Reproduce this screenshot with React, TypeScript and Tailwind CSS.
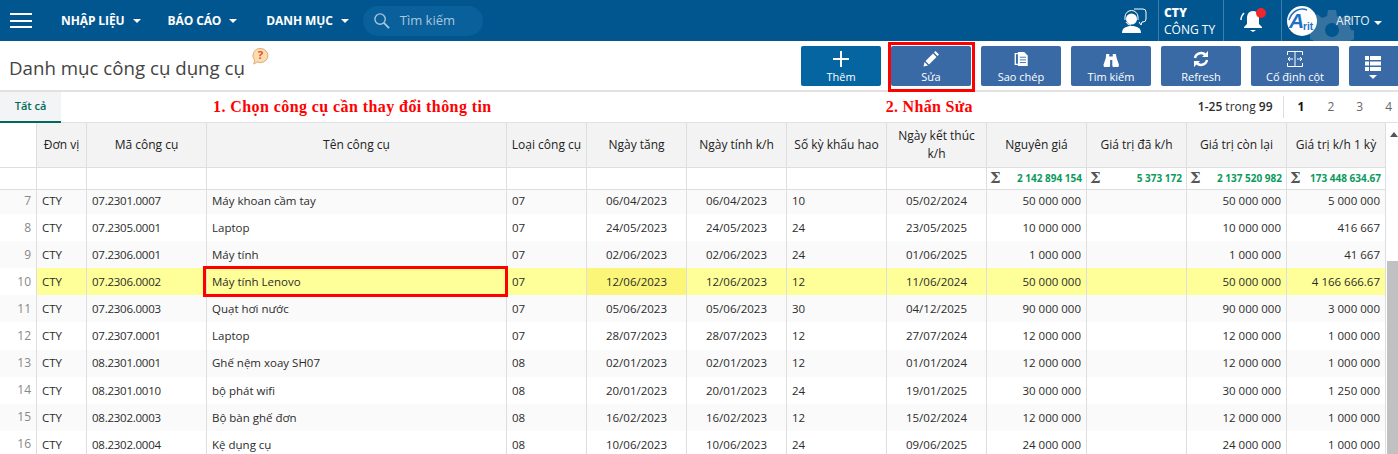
const font = "font-['Open_Sans','Noto_Sans',sans-serif]";

const columns = [
  "Đơn vị",
  "Mã công cụ",
  "Tên công cụ",
  "Loại công cụ",
  "Ngày tăng",
  "Ngày tính k/h",
  "Số kỳ khấu hao",
  "Ngày kết thúc k/h",
  "Nguyên giá",
  "Giá trị đã k/h",
  "Giá trị còn lại",
  "Giá trị k/h 1 kỳ",
];

const totals = ["2 142 894 154", "5 373 172", "2 137 520 982", "173 448 634.67"];

const rows = [
  ["7", "CTY", "07.2301.0007", "Máy khoan cầm tay", "07", "06/04/2023", "06/04/2023", "10", "05/02/2024", "50 000 000", "", "50 000 000", "5 000 000"],
  ["8", "CTY", "07.2305.0001", "Laptop", "07", "24/05/2023", "24/05/2023", "24", "23/05/2025", "10 000 000", "", "10 000 000", "416 667"],
  ["9", "CTY", "07.2306.0001", "Máy tính", "07", "02/06/2023", "02/06/2023", "24", "01/06/2025", "1 000 000", "", "1 000 000", "41 667"],
  ["10", "CTY", "07.2306.0002", "Máy tính Lenovo", "07", "12/06/2023", "12/06/2023", "12", "11/06/2024", "50 000 000", "", "50 000 000", "4 166 666.67"],
  ["11", "CTY", "07.2306.0003", "Quạt hơi nước", "07", "05/06/2023", "05/06/2023", "30", "04/12/2025", "90 000 000", "", "90 000 000", "3 000 000"],
  ["12", "CTY", "07.2307.0001", "Laptop", "07", "28/07/2023", "28/07/2023", "12", "27/07/2024", "12 000 000", "", "12 000 000", "1 000 000"],
  ["13", "CTY", "08.2301.0001", "Ghế nệm xoay SH07", "08", "02/01/2023", "02/01/2023", "12", "01/01/2024", "12 000 000", "", "12 000 000", "1 000 000"],
  ["14", "CTY", "08.2301.0010", "bộ phát wifi", "08", "20/01/2023", "20/01/2023", "24", "19/01/2025", "30 000 000", "", "30 000 000", "1 250 000"],
  ["15", "CTY", "08.2302.0003", "Bộ bàn ghế đơn", "08", "16/02/2023", "16/02/2023", "12", "15/02/2024", "12 000 000", "", "12 000 000", "1 000 000"],
  ["16", "CTY", "08.2302.0004", "Kệ dụng cụ", "08", "10/06/2023", "10/06/2023", "24", "09/06/2025", "24 000 000", "", "24 000 000", "1 000 000"],
];

const gridCols = "grid grid-cols-[37px_50px_120px_300px_80px_100px_100px_100px_100px_100px_100px_100px_99px]";

function cellAlign(i: number) {
  if (i === 0 || i >= 9) return "justify-end text-right";
  if (i === 5 || i === 6 || i === 8) return "justify-center text-center";
  if (i === 2) return "justify-start tracking-[-0.25px]";
  return "justify-start";
}

function Caret() {
  return <span className="ml-[8px] inline-block border-x-[4px] border-t-[4px] border-x-transparent border-t-white" />;
}

function NavMenu({ label, className }: { label: string; className: string }) {
  return (
    <div className={`flex items-center text-[12px] font-bold tracking-[-0.1px] text-white ${className}`}>
      {label}
      <Caret />
    </div>
  );
}

function ToolButton({ label, icon, className }: { label: string; icon: React.ReactNode; className?: string }) {
  return (
    <button className={`flex h-10 flex-col items-center rounded-[2px] bg-[#3a6aa5] text-[11px] font-medium leading-[11px] text-white ${className ?? "w-20"}`}>
      <span className="flex h-[21px] items-end">{icon}</span>
      <span className="mt-[4px]">{label}</span>
    </button>
  );
}

function Sigma() {
  return <span className="font-['DejaVu_Serif',serif] text-[15px] font-bold leading-none text-[#555]">Σ</span>;
}

export default function App() {
  return (
    <div className={`relative h-[454px] w-[1398px] overflow-hidden bg-white text-[11.5px] text-[#2b2b2b] ${font}`}>
      {/* top bar */}
      <header className="flex h-[41px] items-center overflow-hidden bg-[#01568f]">
        <div className="ml-[10px] flex h-[15px] w-[22px] flex-col justify-between">
          <span className="h-[2px] bg-white" />
          <span className="h-[2px] bg-white" />
          <span className="h-[2px] bg-white" />
        </div>
        <NavMenu label="NHẬP LIỆU" className="ml-[29px]" />
        <NavMenu label="BÁO CÁO" className="ml-[27px]" />
        <NavMenu label="DANH MỤC" className="ml-[29px]" />
        <div className="ml-[14px] flex h-[30px] w-[120px] items-center rounded-[15px] bg-[#0a609b]">
          <svg viewBox="0 0 18 18" className="ml-[10px] h-[17px] w-[17px]" fill="none" stroke="#a9c6dc" strokeWidth="1.5">
            <circle cx="7.5" cy="7.5" r="5.5" />
            <path d="M11.5 11.5 17 17" strokeWidth="2" />
          </svg>
          <span className="ml-[10px] text-[13px] text-[#a9c6dc]">Tìm kiếm</span>
        </div>

        <div className="ml-auto flex h-full items-center">
          <svg viewBox="0 0 26 26" className="mr-[11px] h-[26px] w-[26px]">
            <circle cx="10.5" cy="11" r="5.500" fill="#fff" />
            <path d="M1 25c0-5 4-7 9.500-7S20 20 20 25z" fill="#fff" />
            <path d="M4 12V9a6.500 6.500 0 0 1 13 0v3M5 14c1 2 3 3 5 3" fill="none" stroke="#fff" strokeWidth="1" />
            <path d="M13 1h9a3 3 0 0 1 3 3v7a3 3 0 0 1-3 3h-1l-1 3-2-3" fill="none" stroke="#fff" strokeWidth="1" />
          </svg>
          <div className="flex h-full w-[66px] flex-col justify-center border-x border-[#3a7fad] pl-[5px] text-white">
            <span className="text-[12px] font-extrabold leading-[17px]">CTY</span>
            <span className="text-[12px] leading-[17px]">CÔNG TY</span>
          </div>
          <div className="flex h-full w-[57px] items-center justify-center">
            <div className="relative">
              <svg viewBox="0 0 26 26" className="h-[26px] w-[26px]" fill="#fff">
                <path d="M13 3c-4 0-6 3-6 7v6l-3 3v1h18v-1l-3-3v-6c0-4-2-7-6-7z" />
                <path d="M10 22h6l-3 2z" />
                <path d="M1 12c0-3 1-5 3-7" fill="none" stroke="#fff" strokeWidth="1.500" />
              </svg>
              <span className="absolute right-0 top-0 h-[10px] w-[10px] rounded-full bg-[#f0262c]" />
            </div>
          </div>
          <div className="relative flex h-full w-[117px] items-center border-l border-[#3a7fad] pl-[5px]">
            <svg viewBox="0 0 44 44" className="absolute left-[28px] top-[8px] h-[44px] w-[44px]" fill="#3672a0">
              <path
                fillRule="evenodd"
                d="M18 2h8l1 6 5 2 5-4 6 6-4 5 2 5 6 1v8l-6 1-2 5 4 5-6 6-5-4-5 2-1 6h-8l-1-6-5-2-5 4-6-6 4-5-2-5-6-1v-8l6-1 2-5-4-5 6-6 5 4 5-2zM22 15a7 7 0 1 0 0 14 7 7 0 0 0 0-14z"
              />
            </svg>
            <svg viewBox="0 0 30 30" className="relative h-[30px] w-[30px]">
              <circle cx="15" cy="15" r="15" fill="#fff" />
              <path d="M2 14C5 5 13 1 20 4" fill="none" stroke="#1f6fc4" strokeWidth="1.500" />
              <text x="2" y="22" fontFamily="Liberation Sans" fontSize="21" fontWeight="700" fontStyle="italic" fill="#1f6fc4">A</text>
              <text x="16" y="24" fontFamily="Liberation Sans" fontSize="10" fontWeight="700" fill="#1f6fc4">rit</text>
            </svg>
            <span className="relative ml-[19px] text-[12px] tracking-[-0.2px] text-[#e6eef4]">ARITO</span>
            <span className="relative -ml-[3px]"><Caret /></span>
          </div>
        </div>
      </header>

      {/* toolbar */}
      <div className="flex h-[51px] items-center border-b-2 border-[#e2e2e2] pb-[1px]">
        <h1 className="ml-[9px] mt-[6px] text-[18.7px] leading-none text-[#444]">Danh mục công cụ dụng cụ</h1>
        <svg viewBox="0 0 20 20" className="mb-[17px] ml-[6px] h-[19px] w-[19px]">
          <path d="M10 1.500a8 7.500 0 1 1-3.500 14.300L3 18l.8-4.200A8 7.500 0 0 1 10 1.500z" fill="#fbdcae" stroke="#e0a870" />
          <text x="10" y="13" textAnchor="middle" fontSize="12" fontWeight="700" fill="#e8502a">?</text>
        </svg>
        <div className="ml-auto flex gap-[10px] pt-[1px]">
          <ToolButton
            label="Thêm"
            className="w-20 !bg-[#0565a0]"
            icon={
              <svg viewBox="0 0 16 16" className="h-4 w-4" stroke="#fff" strokeWidth="2">
                <path d="M8 0v16M0 8h16" />
              </svg>
            }
          />
          <ToolButton
            label="Sửa"
            icon={
              <svg viewBox="0 0 16 16" className="h-4 w-4" fill="#fff">
                <path d="M.5 15.500 1.500 11 5 14.500zM2.500 10 10 2.500 13.500 6 6 13.500zM11 1.500 12.500 0 16 3.500 14.500 5z" />
              </svg>
            }
          />
          <ToolButton
            label="Sao chép"
            icon={
              <svg viewBox="0 0 16 18" className="h-4 w-[15px]">
                <path d="M1 3h8v12H1z" fill="none" stroke="#fff" strokeWidth="1.500" />
                <path d="M4 1h7l4 4v12H4z" fill="#fff" />
                <path d="M6 7h7M6 10h7M6 13h7" stroke="#3a6aa5" />
              </svg>
            }
          />
          <ToolButton
            label="Tìm kiếm"
            icon={
              <svg viewBox="0 0 18 16" className="h-[14px] w-4" fill="#fff">
                <path d="M3.500 1h3.500v3h4V1h3.500l1 5 2.500 7a3 3 0 0 1-7.500 1V8H8v6a3 3 0 0 1-7.500-1L3 6z" />
              </svg>
            }
          />
          <ToolButton
            label="Refresh"
            icon={
              <svg viewBox="0 0 16 16" className="h-4 w-4" fill="none" stroke="#fff" strokeWidth="2.500">
                <path d="M2 7a6 6 0 0 1 11-2M14 9a6 6 0 0 1-11 2" />
                <path d="M15 0v6H9zM1 16v-6h6z" fill="#fff" stroke="none" />
              </svg>
            }
          />
          <ToolButton
            label="Cố định cột"
            className="w-[88px]"
            icon={
              <svg viewBox="0 0 16 16" className="h-4 w-4" fill="none" stroke="#fff">
                <path d="M.5 4V.5h15V4M.5 12v3.500h15V12M8 0v16" />
                <path d="M1 8h5M15 8h-5M3 6 1 8l2 2M13 6l2 2-2 2" />
              </svg>
            }
          />
          <button className="flex h-10 w-[49px] flex-col items-center justify-end rounded-l-[2px] bg-[#3a6aa5] pb-[6px] pr-[1px]">
            <svg viewBox="0 0 16 24" className="h-6 w-4" fill="#fff">
              <path d="M0 0h4v4H0zM5 0h11v4H5zM0 5.500h4v4H0zM5 5.500h11v4H5zM0 11h4v4H0zM5 11h11v4H5zM4 19h8l-4 4z" />
            </svg>
          </button>
        </div>
      </div>

      {/* tab row and annotations */}
      <div className="flex h-[31px] items-stretch border-b border-[#e2e2e2]">
        <div className="-mb-[1px] flex w-[61px] items-center justify-center border-b-2 border-[#00695c] bg-[#f3f4f6] text-[11px] font-semibold text-[#00695c]">
          Tất cả
        </div>
        <div className="ml-[152px] flex items-center font-['Liberation_Serif',serif] text-[16px] font-bold tracking-[0.42px] text-[#f00]">
          1. Chọn công cụ cần thay đổi thông tin
        </div>
        <div className="ml-[394px] flex items-center font-['Liberation_Serif',serif] text-[16px] font-bold tracking-[0.3px] text-[#f00]">
          2. Nhấn Sửa
        </div>
        <div className="ml-auto flex items-center text-[12px]">
          <span>
            <b className="font-semibold">1-25</b> trong <b className="font-semibold">99</b>
          </span>
          <span className="ml-[10px] h-[22px] border-l border-[#ddd]" />
          <span className="ml-[14px] font-bold text-[#111]">1</span>
          <span className="ml-[23px] text-[#666]">2</span>
          <span className="ml-[22px] text-[#666]">3</span>
          <span className="ml-[22px] mr-[6px] text-[#666]">4</span>
        </div>
      </div>

      {/* grid */}
      <div className="flex">
        <div className="w-[1386px]">
          <div className={`${gridCols} h-[45px] border-b border-[#dedede] bg-[#f3f3f3] text-[12px] font-medium text-[#222]`}>
            <div className="border-r border-[#dedede] bg-white" />
            {columns.map((c) => (
              <div key={c} className="flex items-center justify-center border-r border-[#dedede] px-[4px] text-center leading-[18px]">
                {c}
              </div>
            ))}
          </div>
          <div className={`${gridCols} h-[22px] border-b border-[#dedede]`}>
            {Array.from({ length: 9 }).map((_, i) => (
              <div key={i} className="border-r border-[#dedede]" />
            ))}
            {totals.map((t) => (
              <div key={t} className="flex items-center justify-between border-r border-[#dedede] pl-[3px] pr-[4px] text-[10px] font-bold text-[#0a9a5c]">
                <Sigma />
                {t}
              </div>
            ))}
          </div>
          <div className="h-[264px] overflow-hidden">
            <div className="mt-[-3px]">
              {rows.map((r, idx) => {
                const selected = r[0] === "10";
                const rowBg = selected ? "bg-[#ffff99]" : idx % 2 === 0 ? "bg-[#fafafa]" : "bg-white";
                return (
                  <div key={r[0]} className={`${gridCols} h-[27.1px] ${rowBg}`}>
                    {r.map((v, i) => (
                      <div
                        key={i}
                        className={`flex items-center overflow-hidden whitespace-nowrap border-r border-[#dedede] px-[5px] ${cellAlign(i)} ${i === 0 ? "text-[12px] text-[#888]" : ""} ${selected && i === 0 ? "bg-white" : ""} ${selected && i === 5 ? "bg-[#fbf678]" : ""}`}
                      >
                        {v}
                      </div>
                    ))}
                  </div>
                );
              })}
            </div>
          </div>
        </div>
        <div className="flex w-[12px] flex-col bg-white">
          <div className="ml-auto mt-[9px] border-x-[4px] border-b-[5px] border-x-transparent border-b-[#555]" />
          <div className="ml-[1px] mt-[124px] h-[193px] bg-[#c1c1c1]" />
        </div>
      </div>

      {/* red annotation boxes */}
      <div className="absolute left-[888px] top-[42px] h-[50px] w-[87px] border-[3px] border-[#f00]" />
      <div className="absolute left-[203px] top-[266px] h-[31px] w-[305px] border-[3px] border-[#f00]" />
    </div>
  );
}
